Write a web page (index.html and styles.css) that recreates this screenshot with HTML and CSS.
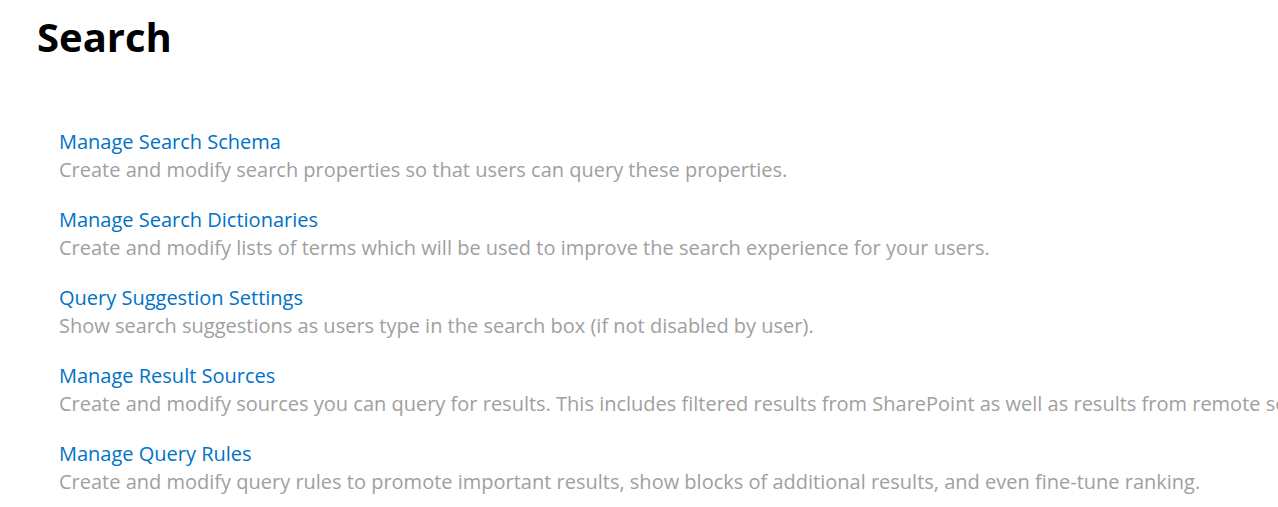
FILE: index.html
```html
<!DOCTYPE html>
<html>
<head>
<meta charset="utf-8">
<link rel="stylesheet" href="styles.css">
</head>
<body>
<div class="page">
  <h1 class="title">Search</h1>
  <ul class="list">
    <li class="item">
      <a class="link" href="#">Manage Search Schema</a>
      <div class="desc">Create and modify search properties so that users can query these properties.</div>
    </li>
    <li class="item">
      <a class="link" href="#">Manage Search Dictionaries</a>
      <div class="desc">Create and modify lists of terms which will be used to improve the search experience for your users.</div>
    </li>
    <li class="item">
      <a class="link" href="#">Query Suggestion Settings</a>
      <div class="desc">Show search suggestions as users type in the search box (if not disabled by user).</div>
    </li>
    <li class="item">
      <a class="link" href="#">Manage Result Sources</a>
      <div class="desc">Create and modify sources you can query for results. This includes filtered results from SharePoint as well as results from remote sources.</div>
    </li>
    <li class="item">
      <a class="link" href="#">Manage Query Rules</a>
      <div class="desc">Create and modify query rules to promote important results, show blocks of additional results, and even fine-tune ranking.</div>
    </li>
  </ul>
</div>
</body>
</html>
```
FILE: styles.css
```css
html, body {
  margin: 0;
  padding: 0;
  background: #ffffff;
  overflow: hidden;
}
.page {
  font-family: "Open Sans", "Noto Sans", sans-serif;
  padding: 10px 0 0 37px;
  width: 1241px;
  overflow: hidden;
}
.title {
  margin: 0;
  font-size: 40px;
  font-weight: 700;
  color: #000;
  line-height: 54px;
}
.list {
  list-style: none;
  margin: 0;
  padding: 64px 0 0 22px;
  display: flex;
  flex-direction: column;
  gap: 22px;
}
.item {
  display: flex;
  flex-direction: column;
  white-space: nowrap;
}
.link {
  color: #0072c6;
  text-decoration: none;
  font-size: 20px;
  line-height: 28px;
}
.desc {
  color: #a0a0a0;
  font-size: 20px;
  line-height: 28px;
}
```
